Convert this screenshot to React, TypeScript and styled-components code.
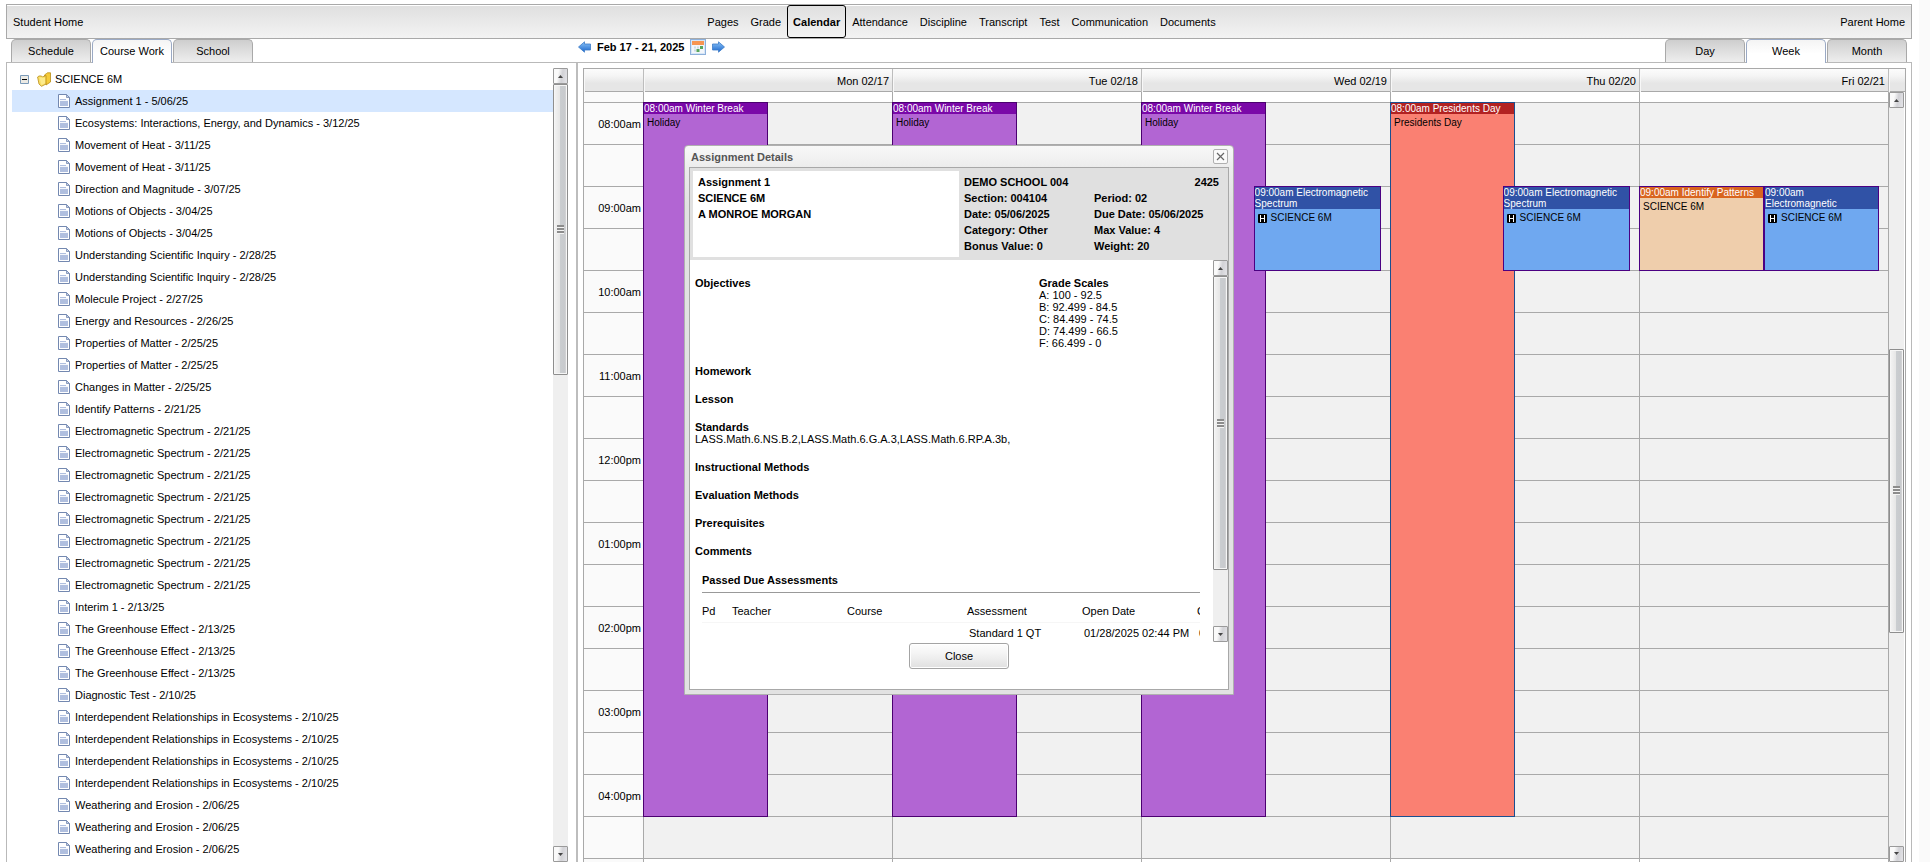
import React from "react";
import styled, { createGlobalStyle, css } from "styled-components";

const GlobalStyle = createGlobalStyle`
  * { box-sizing: border-box; }
  html, body { margin: 0; padding: 0; background: #fafafa; overflow: hidden; }
  body, button, table {
    font-family: "Liberation Sans", Arial, Helvetica, sans-serif;
    font-size: 11px;
    color: #000;
  }
  button { padding: 0; cursor: pointer; }
  a { color: inherit; text-decoration: none; }
  h1, h2, h3, p, ul, dl, dd, dt { margin: 0; padding: 0; font-size: 11px; }
  ul { list-style: none; }
`;

const LINE = "#a9a9a9";

/* ---------- data ---------- */

const navItems = [
  "Pages", "Grade", "Calendar", "Attendance", "Discipline",
  "Transcript", "Test", "Communication", "Documents",
];

const repeat = (text: string, count: number): string[] => Array(count).fill(text);

const assignments: string[] = [
  "Assignment 1 - 5/06/25",
  "Ecosystems: Interactions, Energy, and Dynamics - 3/12/25",
  ...repeat("Movement of Heat - 3/11/25", 2),
  "Direction and Magnitude - 3/07/25",
  ...repeat("Motions of Objects - 3/04/25", 2),
  ...repeat("Understanding Scientific Inquiry - 2/28/25", 2),
  "Molecule Project - 2/27/25",
  "Energy and Resources - 2/26/25",
  ...repeat("Properties of Matter - 2/25/25", 2),
  "Changes in Matter - 2/25/25",
  "Identify Patterns - 2/21/25",
  ...repeat("Electromagnetic Spectrum - 2/21/25", 8),
  "Interim 1 - 2/13/25",
  ...repeat("The Greenhouse Effect - 2/13/25", 3),
  "Diagnostic Test - 2/10/25",
  ...repeat("Interdependent Relationships in Ecosystems - 2/10/25", 4),
  ...repeat("Weathering and Erosion - 2/06/25", 3),
];

const hours = [
  "08:00am", "09:00am", "10:00am", "11:00am", "12:00pm",
  "01:00pm", "02:00pm", "03:00pm", "04:00pm",
];

type Tone = "holiday" | "presidents" | "science" | "patterns";

interface CalendarEvent {
  tone: Tone;
  title: string;
  body: string;
  homework?: boolean;
  start: number;
  span: number;
  left: number;
  width: number;
}

const winterBreak: CalendarEvent = {
  tone: "holiday", title: "08:00am Winter Break", body: "Holiday",
  start: 0, span: 17, left: 0, width: 50,
};

const spectrum: CalendarEvent = {
  tone: "science", title: "09:00am Electromagnetic Spectrum", body: "SCIENCE 6M",
  homework: true, start: 2, span: 2, left: 45, width: 51,
};

const days: { label: string; events: CalendarEvent[] }[] = [
  { label: "Mon 02/17", events: [winterBreak] },
  { label: "Tue 02/18", events: [winterBreak] },
  { label: "Wed 02/19", events: [winterBreak, spectrum] },
  {
    label: "Thu 02/20",
    events: [
      {
        tone: "presidents", title: "08:00am Presidents Day", body: "Presidents Day",
        start: 0, span: 17, left: 0, width: 50,
      },
      spectrum,
    ],
  },
  {
    label: "Fri 02/21",
    events: [
      {
        tone: "patterns", title: "09:00am Identify Patterns", body: "SCIENCE 6M",
        start: 2, span: 2, left: 0, width: 50,
      },
      { ...spectrum, title: "09:00am Electromagnetic", left: 50, width: 46 },
    ],
  },
];

const tones: Record<Tone, { title: string; body: string; border: string }> = {
  holiday: { title: "#7a08a8", body: "#b265d3", border: "#4b0070" },
  presidents: { title: "#b22222", body: "#fa8072", border: "#1a4f90" },
  science: { title: "#3052a6", body: "#6fa8f0", border: "#4b0082" },
  patterns: { title: "#d9651f", body: "#efceac", border: "#4b0082" },
};

/* ---------- page frame ---------- */

const Page = styled.div`
  display: flex;
  flex-direction: column;
  height: 100vh;
  margin-right: 11px;
  padding: 4px 7px 0 6px;
  background: #fff;
  overflow: hidden;
`;

const Header = styled.header`
  display: grid;
  grid-template-columns: 1fr auto 1fr;
  align-items: center;
  flex: none;
  height: 35px;
  padding: 0 6px;
  border: 1px solid ${LINE};
  background: linear-gradient(#dfdfdf, #f3f3f3);
  box-shadow: inset 0 1px #fff;
`;

const HomeLink = styled.a<{ $end?: boolean }>`
  justify-self: ${(p) => (p.$end ? "end" : "start")};
  padding-top: 2px;
  line-height: 31px;
`;

const Nav = styled.nav`
  display: flex;
  align-items: center;
  margin-left: 5px;
`;

const NavLink = styled.a<{ $active: boolean }>`
  padding: 2px 6px 0;
  line-height: 31px;
  border-radius: 3px;
  ${(p) =>
    p.$active &&
    css`
      padding: 2px 5px 0;
      border: 1px solid #000;
      line-height: 29px;
      font-weight: bold;
    `}
`;

const TabStrip = styled.div`
  display: flex;
  flex: none;
  height: 23px;
  padding: 0 5px;
`;

const Tabs = styled.div<{ $width?: number }>`
  display: flex;
  gap: 1px;
  flex: none;
  width: ${(p) => (p.$width ? `${p.$width}px` : "auto")};
`;

const Tab = styled.button<{ $active?: boolean }>`
  width: 80px;
  height: 23px;
  border: 1px solid ${LINE};
  border-bottom: 0;
  border-radius: 5px 5px 0 0;
  background: linear-gradient(#cecece, #eeeeee);
  ${(p) =>
    p.$active &&
    css`
      z-index: 1;
      height: 24px;
      padding-bottom: 1px;
      border-color: #9aa9c4;
      background: linear-gradient(#f4f4f4, #fff 60%);
    `}
`;

const DateNav = styled.div`
  display: flex;
  flex: 1;
  align-items: center;
  gap: 6px;
  height: 16px;
`;

const IconButton = styled.button`
  display: flex;
  border: 0;
  background: none;
`;

const CalendarButton = styled(IconButton)`
  border: 1px solid #8db0da;
  background: #d6e6f8;
`;

const Main = styled.main`
  display: flex;
  flex: 1;
  min-height: 0;
  border: 1px solid #b9b9b9;
  border-bottom: 0;
`;

/* ---------- scrollbar ---------- */

const Rail = styled.div`
  display: flex;
  flex-direction: column;
  flex: none;
  width: 15px;
  background: #efefef;
`;

const RailButton = styled.button`
  display: flex;
  align-items: center;
  justify-content: center;
  flex: none;
  height: 16px;
  border: 1px solid #9a9a9a;
  border-radius: 1px;
  background: linear-gradient(100deg, #fafafa 30%, #d2d2d6 60%, #e4e4e8);
`;

const RailSpace = styled.div<{ $grow: number }>`
  flex: ${(p) => p.$grow} 0 0;
`;

const Thumb = styled.div<{ $grow: number }>`
  display: flex;
  flex: ${(p) => p.$grow} 0 0;
  align-items: center;
  justify-content: center;
  border: 1px solid #8e8e8e;
  border-radius: 1px;
  box-shadow: inset 0 0 0 1px #f6f6f6;
  background: linear-gradient(90deg, #f4f4f4, #e6e6e6 45%, #cacdd0 50%, #c8cacd 80%, #dcdcdc);
`;

function Scrollbar({ before, thumb, after }: { before: number; thumb: number; after: number }) {
  return (
    <Rail>
      <RailButton aria-label="Scroll up">
        <svg width="5" height="3"><path d="M0 3L2.500 0L5 3Z" fill="#444" /></svg>
      </RailButton>
      {before > 0 && <RailSpace $grow={before} />}
      <Thumb $grow={thumb}>
        <svg width="7" height="9">
          <rect width="7" height="9" fill="#f4f4f4" />
          <path d="M0 1H7M0 4H7M0 7H7" stroke="#6a6a6a" strokeWidth="1.500" />
        </svg>
      </Thumb>
      <RailSpace $grow={after} />
      <RailButton aria-label="Scroll down">
        <svg width="5" height="3"><path d="M0 0H5L2.500 3Z" fill="#444" /></svg>
      </RailButton>
    </Rail>
  );
}

/* ---------- course tree ---------- */

const Sidebar = styled.aside`
  display: flex;
  flex: none;
  width: 571px;
  padding: 5px 8px 0 5px;
  border-right: 2px solid #bdbdbd;
  overflow: hidden;
`;

const Tree = styled.ul`
  flex: 1;
  overflow: hidden;
`;

const CourseRow = styled.li`
  display: flex;
  align-items: center;
  height: 22px;
  padding-left: 8px;
`;

const Toggle = styled.button`
  display: flex;
  margin-right: 8px;
  border: 0;
  background: none;
`;

const CourseName = styled.span`
  margin-left: 3px;
`;

const WorkLink = styled.a<{ $selected: boolean }>`
  display: flex;
  align-items: center;
  gap: 5px;
  height: 22px;
  padding-left: 46px;
  background: ${(p) => (p.$selected ? "#d5e7ff" : "transparent")};
`;

function MinusIcon() {
  return (
    <svg width="9" height="9">
      <path d="M0.500 0.500H8.500V8.500H0.500Z" fill="#eceae4" stroke="#7b9ab8" />
      <path d="M2 4.500H7" stroke="#000" />
    </svg>
  );
}

function FolderIcon() {
  return (
    <svg width="15" height="15" viewBox="0 0 15 15">
      <path d="M7.500 3L9.500 1.500L10.500 0.800H13.500V10L9 13Z" fill="#f5cb3a" stroke="#b98b14" strokeWidth="0.800" />
      <path d="M0.600 5L2 4H4.500L5.500 5L9 3.500V12L4.500 14.300L2 12Z" fill="#fae06a" stroke="#b98b14" strokeWidth="0.800" />
      <path d="M2.500 5.500L4.500 13L8 11V6" fill="#fdeb8c" />
    </svg>
  );
}

function PageIcon() {
  return (
    <svg width="12" height="14" viewBox="0 0 12 14">
      <path d="M0.500 0.500H8.500L11.500 3.500V13.500H0.500Z" fill="#fff" stroke="#7388b0" />
      <path d="M2 7H10V12H2Z" fill="#b0bfdf" />
      <path d="M2 5.500H8M2 7.500H10" stroke="#b0bfdf" />
      <path d="M2 6.500H10" stroke="#f4f7fc" />
      <path d="M8.500 0.500V3.500H11.500Z" fill="#c5d1e8" stroke="#7388b0" strokeWidth="0.800" />
    </svg>
  );
}

/* ---------- calendar ---------- */

const CalendarPane = styled.section`
  display: flex;
  flex: 1;
  min-width: 0;
  padding: 5px 5px 0;
`;

const Week = styled.div`
  display: flex;
  flex: 1;
  flex-direction: column;
  min-width: 0;
  border: 1px solid ${LINE};
  border-bottom: 0;
`;

const WeekHead = styled.div`
  display: grid;
  grid-template-columns: 60px repeat(5, 1fr) 16px;
  flex: none;
  height: 23px;
  border-bottom: 1px solid ${LINE};
  background: linear-gradient(#fcfcfc, #f5f5f5 30%, #e6e6e6 65%, #e6e6e6);
`;

const DayHead = styled.div`
  padding-right: 3px;
  border-right: 1px solid #bdbdbd;
  box-shadow: inset 1px 0 #f8f8f8;
  line-height: 24px;
  text-align: right;

  &:last-child { border-right: 0; }
`;

const WeekBody = styled.div`
  display: grid;
  grid-template-columns: 60px repeat(5, 1fr) 16px;
  grid-template-rows: 100%;
  flex: 1;
  min-height: 0;
  overflow: hidden;
`;

const TimeColumn = styled.div`
  z-index: 1;
  border-right: 1px solid ${LINE};
  background: #fafafa;
`;

const Slot = styled.div<{ $tone?: "edge" | "open" }>`
  height: ${(p) => (p.$tone === "edge" ? 11 : 42)}px;
  padding-right: 2px;
  border-bottom: 1px solid ${LINE};
  background: ${(p) => (p.$tone ? "#fff" : "transparent")};
  line-height: 42px;
  text-align: right;
`;

const TimeEdge = styled(Slot)`
  background: #fafafa;
`;

const DayColumn = styled.div`
  position: relative;
  border-right: 1px solid ${LINE};
  background: #f1f1f1;
`;

const EventBox = styled.article<{ $tone: Tone; $start: number; $span: number; $left: number; $width: number }>`
  position: absolute;
  z-index: 1;
  top: ${(p) => 10 + p.$start * 42}px;
  left: calc(${(p) => p.$left}% - ${(p) => (p.$left ? 0 : 1)}px);
  width: calc(${(p) => p.$width}% + 1px);
  height: ${(p) => p.$span * 42 + 1}px;
  border: 1px solid ${(p) => tones[p.$tone].border};
  background: ${(p) => tones[p.$tone].body};
  font-size: 10px;
  overflow: hidden;
`;

const EventTitle = styled.h3<{ $tone: Tone }>`
  background: ${(p) => tones[p.$tone].title};
  color: #fff;
  font-size: 10px;
  font-weight: normal;
  line-height: 11px;
`;

const EventBody = styled.p`
  display: flex;
  align-items: center;
  gap: 4px;
  padding: 3px 3px 0;
  font-size: 10px;
  line-height: 12px;
`;

function HomeworkIcon() {
  return (
    <svg width="9" height="9">
      <rect width="9" height="9" rx="1" fill="#000" />
      <path d="M2.500 1V8M6.500 1V8M2.500 4.500H6.500" stroke="#fff" />
    </svg>
  );
}

function ArrowIcon({ flip }: { flip?: boolean }) {
  return (
    <svg width="13" height="12" viewBox="0 0 13 12">
      <defs>
        <linearGradient id="arrow" x1="0" y1="0" x2="0" y2="1">
          <stop offset="0" stopColor="#8cc4f8" />
          <stop offset="1" stopColor="#1a66cc" />
        </linearGradient>
      </defs>
      <path
        d={flip ? "M12.500 6L6.500 0.800V3H0.500V9H6.500V11.200Z" : "M0.500 6L6.500 0.800V3H12.500V9H6.500V11.200Z"}
        fill="url(#arrow)"
        stroke="#3d7cc8"
        strokeWidth="0.800"
      />
    </svg>
  );
}

function CalendarIcon() {
  return (
    <svg width="14" height="14" viewBox="0 0 14 14">
      <rect x="1" y="1" width="12" height="12" fill="#f3f6fa" />
      <rect x="1" y="1" width="12" height="4" fill="#f79552" />
      <path d="M3 6.500H5V8.500H3ZM6 6.500H8V8.500H6ZM3 9.500H5V11.500H3Z" fill="#cfdae6" />
      <path d="M9 6H12V9H9ZM5.500 9H8.500V12H5.500Z" fill="#58a65c" />
    </svg>
  );
}

/* ---------- assignment dialog ---------- */

const Overlay = styled.div`
  position: absolute;
  z-index: 5;
  inset: 0 12px 0 0;
  display: flex;
  align-items: flex-start;
  justify-content: center;
  padding-top: 145px;
`;

const Dialog = styled.section`
  display: flex;
  flex-direction: column;
  width: 550px;
  height: 550px;
  padding: 0 4px 4px;
  border: 1px solid #b0b0b0;
  border-radius: 4px 4px 0 0;
  background: linear-gradient(#f8f8f8, #ececec 22px, #e2e2e2 60px);
`;

const DialogBar = styled.div`
  display: flex;
  align-items: center;
  justify-content: space-between;
  flex: none;
  height: 21px;
  padding: 0 1px 0 2px;
`;

const DialogTitle = styled.h2`
  color: #555;
`;

const CloseIcon = styled.button`
  display: flex;
  align-items: center;
  justify-content: center;
  width: 15px;
  height: 15px;
  border: 1px solid #b0b0b0;
  border-radius: 2px;
  background: #fafafa;
`;

const DialogContent = styled.div`
  display: flex;
  flex: 1;
  flex-direction: column;
  min-height: 0;
  border: 1px solid #a8a8a8;
  background: #fff;
`;

const Summary = styled.div`
  display: flex;
  flex: none;
  padding: 3px;
  background: #e0e0e0;
  font-weight: bold;
  line-height: 16px;
`;

const SummaryCard = styled.div`
  width: 266px;
  height: 86px;
  padding: 3px 5px;
  background: #fff;
`;

const Facts = styled.div`
  display: grid;
  grid-template-columns: 130px 1fr;
  grid-auto-rows: 16px;
  flex: 1;
  padding: 3px 6px 0 5px;
  white-space: nowrap;
`;

const SchoolYear = styled.span`
  justify-self: end;
`;

const Scroll = styled.div`
  display: flex;
  flex: none;
  height: 382px;
`;

const ScrollContent = styled.div`
  flex: 1;
  min-width: 0;
  padding: 17px 13px 0 5px;
  line-height: 12px;
  overflow: hidden;
`;

const Split = styled.div`
  display: grid;
  grid-template-columns: 344px 1fr;
  height: 72px;
`;

const Field = styled.section`
  margin-top: 16px;
`;

const PastDue = styled.section`
  margin-top: 16px;
  padding-left: 7px;
  overflow: hidden;
`;

const PastDueTitle = styled.h3`
  height: 20px;
  border-bottom: 1px solid #999;
  line-height: 14px;
`;

const AssessmentTable = styled.table`
  width: 600px;
  margin-top: 7px;
  border-collapse: collapse;
  table-layout: fixed;

  th, td { height: 22px; padding: 0; text-align: left; font-weight: normal; }
  td { padding-left: 2px; }
  thead { border-bottom: 1px solid #f6f6f6; }
`;

const DialogFooter = styled.div`
  display: flex;
  justify-content: center;
  padding-top: 1px;
`;

const CloseButton = styled.button`
  width: 100px;
  height: 26px;
  border: 1px solid #a4a4a4;
  border-radius: 3px;
  background: linear-gradient(#fdfdfd, #f4f4f4 40%, #e0e0e0);
  box-shadow: inset 0 0 0 1px #fff;
`;

const gradeScales = ["A: 100 - 92.5", "B: 92.499 - 84.5", "C: 84.499 - 74.5", "D: 74.499 - 66.5", "F: 66.499 - 0"];

const fields: { name: string; text?: string }[] = [
  { name: "Homework" },
  { name: "Lesson" },
  { name: "Standards", text: "LASS.Math.6.NS.B.2,LASS.Math.6.G.A.3,LASS.Math.6.RP.A.3b," },
  { name: "Instructional Methods" },
  { name: "Evaluation Methods" },
  { name: "Prerequisites" },
  { name: "Comments" },
];

function AssignmentDialog() {
  return (
    <Overlay>
      <Dialog role="dialog" aria-labelledby="dialog-title">
        <DialogBar>
          <DialogTitle id="dialog-title">Assignment Details</DialogTitle>
          <CloseIcon aria-label="Close dialog">
            <svg width="9" height="9"><path d="M1 1L8 8M8 1L1 8" stroke="#666" strokeWidth="1.200" /></svg>
          </CloseIcon>
        </DialogBar>
        <DialogContent>
          <Summary>
            <SummaryCard>
              <p>Assignment 1</p>
              <p>SCIENCE 6M</p>
              <p>A MONROE MORGAN</p>
            </SummaryCard>
            <Facts>
              <span>DEMO SCHOOL 004</span>
              <SchoolYear>2425</SchoolYear>
              <span>Section: 004104</span>
              <span>Period: 02</span>
              <span>Date: 05/06/2025</span>
              <span>Due Date: 05/06/2025</span>
              <span>Category: Other</span>
              <span>Max Value: 4</span>
              <span>Bonus Value: 0</span>
              <span>Weight: 20</span>
            </Facts>
          </Summary>
          <Scroll>
            <ScrollContent>
              <Split>
                <h3>Objectives</h3>
                <div>
                  <h3>Grade Scales</h3>
                  {gradeScales.map((g) => <p key={g}>{g}</p>)}
                </div>
              </Split>
              {fields.map((f) => (
                <Field key={f.name}>
                  <h3>{f.name}</h3>
                  {f.text && <p>{f.text}</p>}
                </Field>
              ))}
              <PastDue>
                <PastDueTitle>Passed Due Assessments</PastDueTitle>
                <AssessmentTable>
                  <colgroup>
                    <col width="30" /><col width="115" /><col width="120" />
                    <col width="115" /><col width="115" /><col />
                  </colgroup>
                  <thead>
                    <tr><th>Pd</th><th>Teacher</th><th>Course</th><th>Assessment</th><th>Open Date</th><th>C</th></tr>
                  </thead>
                  <tbody>
                    <tr><td /><td /><td /><td>Standard 1 QT</td><td>01/28/2025 02:44 PM</td><td>0</td></tr>
                  </tbody>
                </AssessmentTable>
              </PastDue>
            </ScrollContent>
            <Scrollbar before={0} thumb={293} after={56} />
          </Scroll>
          <DialogFooter>
            <CloseButton>Close</CloseButton>
          </DialogFooter>
        </DialogContent>
      </Dialog>
    </Overlay>
  );
}

/* ---------- page ---------- */

const halfHours = Array.from({ length: 18 }, (_, i) => i);

export default function App() {
  return (
    <>
      <GlobalStyle />
      <Page>
        <Header>
          <HomeLink href="#student">Student Home</HomeLink>
          <Nav>
            {navItems.map((n) => (
              <NavLink key={n} href="#nav" $active={n === "Calendar"}>{n}</NavLink>
            ))}
          </Nav>
          <HomeLink href="#parent" $end>Parent Home</HomeLink>
        </Header>
        <TabStrip>
          <Tabs $width={567}>
            <Tab>Schedule</Tab>
            <Tab $active>Course Work</Tab>
            <Tab>School</Tab>
          </Tabs>
          <DateNav>
            <IconButton aria-label="Previous week"><ArrowIcon /></IconButton>
            <strong>Feb 17 - 21, 2025</strong>
            <CalendarButton aria-label="Pick a date"><CalendarIcon /></CalendarButton>
            <IconButton aria-label="Next week"><ArrowIcon flip /></IconButton>
          </DateNav>
          <Tabs>
            <Tab>Day</Tab>
            <Tab $active>Week</Tab>
            <Tab>Month</Tab>
          </Tabs>
        </TabStrip>
        <Main>
          <Sidebar>
            <Tree>
              <CourseRow>
                <Toggle aria-label="Collapse course"><MinusIcon /></Toggle>
                <FolderIcon />
                <CourseName>SCIENCE 6M</CourseName>
              </CourseRow>
              {assignments.map((a, i) => (
                <li key={i}>
                  <WorkLink href="#work" $selected={i === 0}><PageIcon />{a}</WorkLink>
                </li>
              ))}
            </Tree>
            <Scrollbar before={0} thumb={290} after={473} />
          </Sidebar>
          <CalendarPane>
            <Week>
              <WeekHead>
                <DayHead />
                {days.map((d) => <DayHead key={d.label}>{d.label}</DayHead>)}
                <DayHead />
              </WeekHead>
              <WeekBody>
                <TimeColumn>
                  <TimeEdge $tone="edge" />
                  {halfHours.map((i) => <Slot key={i}>{i % 2 === 0 ? hours[i / 2] : null}</Slot>)}
                </TimeColumn>
                {days.map((d) => (
                  <DayColumn key={d.label}>
                    <Slot $tone="edge" />
                    {halfHours.map((i) => <Slot key={i} />)}
                    <Slot $tone="open" />
                    {d.events.map((e) => (
                      <EventBox
                        key={e.title}
                        $tone={e.tone}
                        $start={e.start}
                        $span={e.span}
                        $left={e.left}
                        $width={e.width}
                      >
                        <EventTitle $tone={e.tone}>{e.title}</EventTitle>
                        <EventBody>
                          {e.homework && <HomeworkIcon />}
                          {e.body}
                        </EventBody>
                      </EventBox>
                    ))}
                  </DayColumn>
                ))}
                <Scrollbar before={242} thumb={283} after={214} />
              </WeekBody>
            </Week>
          </CalendarPane>
        </Main>
      </Page>
      <AssignmentDialog />
    </>
  );
}
